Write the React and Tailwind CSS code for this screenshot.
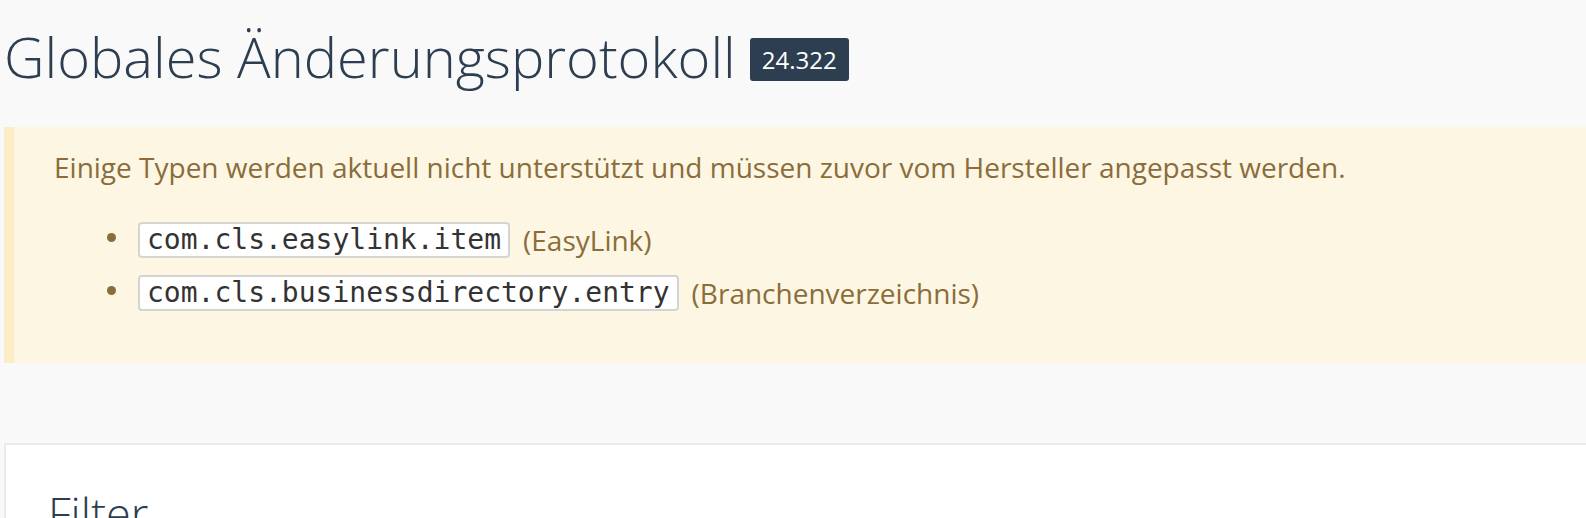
export default function App() {
  const sans = { fontFamily: '"Open Sans", "Noto Sans", sans-serif' };
  const items = [
    { code: "com.cls.easylink.item", label: "(EasyLink)" },
    { code: "com.cls.businessdirectory.entry", label: "(Branchenverzeichnis)" },
  ];
  return (
    <div className="h-[518px] bg-[#f9f9f9] pl-[4px] overflow-hidden" style={sans}>
      <div className="flex items-start pt-[23px] h-[127px]">
        <h1 className="text-[56px] leading-[1.2] font-light text-[#2c3e50] whitespace-nowrap">
          Globales Änderungsprotokoll
        </h1>
        <span className="ml-[14px] mt-[15px] h-[43px] px-[12px] flex items-center rounded-[3px] bg-[#2c3e50] text-white text-[24px] leading-none">
          24.322
        </span>
      </div>

      <div className="border-l-[10px] border-[#fbedc5] bg-[#fdf6e3] pl-[40px] pt-[19px] pb-[44px] text-[#8a6d3b]">
        <p className="text-[28px] leading-[42px] whitespace-nowrap">
          Einige Typen werden aktuell nicht unterstützt und müssen zuvor vom Hersteller angepasst werden.
        </p>
        <ul className="mt-[25px] pl-[53px]">
          {items.map((it) => (
            <li key={it.code} className="flex items-center h-[53px]">
              <span className="w-[9px] h-[9px] rounded-full bg-[#8a6d3b] mr-[22px] mt-[-4px]" />
              <code
                className="border-2 border-[#d4d4d4] bg-white rounded-[4px] px-[7px] h-[36px] flex items-center text-[28px] text-[#333] leading-none"
                style={{ fontFamily: '"DejaVu Sans Mono", "Liberation Mono", monospace' }}
              >
                {it.code}
              </code>
              <span className="ml-[13px] text-[28px] leading-none whitespace-nowrap">{it.label}</span>
            </li>
          ))}
        </ul>
      </div>

      <div className="mt-[80px] border-2 border-r-0 border-b-0 border-[#e6ebf2] bg-white pl-[42px] pt-[41px] h-[200px]">
        <h2 className="text-[45px] leading-[1.2] font-light text-[#2c3e50]">Filter</h2>
      </div>
    </div>
  );
}
